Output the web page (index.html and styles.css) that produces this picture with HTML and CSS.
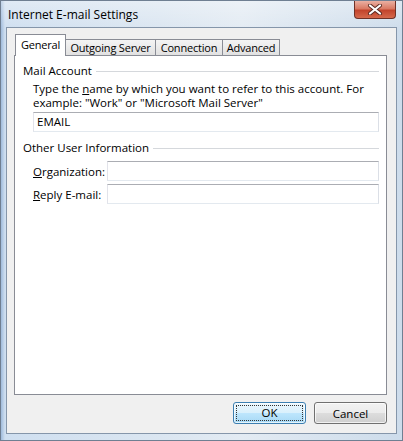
FILE: index.html
```html
<!DOCTYPE html>
<html>
    <head>
        <title>Internet E-mail Settings</title>
        <link rel="stylesheet" href="styles.css">
    </head>
    <body>
        <div class="window">
            <div class="titlebar">
                <span class="title">Internet E-mail Settings</span>
                <span class="close">
                    <svg width="16" height="11" viewBox="0 0 16 11">
                        <path d="M3 1.5 L13 9.5 M13 1.5 L3 9.5" stroke="#5a2a22" stroke-width="4" stroke-linecap="round"/>
                        <path d="M3 1.5 L13 9.5 M13 1.5 L3 9.5" stroke="#fff" stroke-width="2.2" stroke-linecap="round"/>
                    </svg>
                </span>
            </div>
            <div class="client">
                <div class="tabs">
                    <span class="tab selected tab-general">General</span>
                    <span class="tab tab-outgoing">Outgoing Server</span>
                    <span class="tab tab-connection">Connection</span>
                    <span class="tab tab-advanced">Advanced</span>
                </div>
                <div class="panel">
                    <div class="group-head"><span>Mail Account</span><i></i></div>
                    <p class="desc">Type the <span class="key">n</span>ame by which you want to refer to this account. For<br>example: "Work" or "Microsoft Mail Server"</p>
                    <div class="field wide">EMAIL</div>

                    <div class="group-head other"><span>Other User Information</span><i></i></div>
                    <div class="row first">
                        <label><span class="key">O</span>rganization:</label>
                        <div class="field"></div>
                    </div>
                    <div class="row">
                        <label><span class="key">R</span>eply E-mail:</label>
                        <div class="field"></div>
                    </div>
                </div>
                <div class="buttons">
                    <button class="btn default"><span>OK</span></button>
                    <button class="btn">Cancel</button>
                </div>
            </div>
        </div>
    </body>
</html>
```

FILE: styles.css
```css
html,
body {
    margin: 0;
    padding: 0;
}

body {
    width: 403px;
    height: 441px;
    font-family: "Open Sans", "Noto Sans", sans-serif;
    font-size: 11.5px;
    color: #000;
}

.key { text-decoration: underline; }

.window {
    box-sizing: border-box;
    width: 403px;
    height: 441px;
    border: 1px solid #6f7f92;
    padding: 0 5px 6px 5px;
    display: flex;
    flex-direction: column;
    background:
        linear-gradient(to bottom, rgba(255,255,255,.35), rgba(255,255,255,0) 30px),
        linear-gradient(to right, #9fbbdc 0, #cfdff0 4px, #dbe6f1 40%, #e3ebf3 60%, #cddceb 100%);
}

.titlebar {
    height: 26px;
    display: flex;
    align-items: flex-start;
    justify-content: space-between;
}

.title {
    margin: 6px 0 0 2px;
    font-size: 12px;
    line-height: 16px;
}

.close {
    width: 42px;
    height: 18px;
    margin-right: 1px;
    box-sizing: border-box;
    border: 1px solid #6e3127;
    border-top: none;
    border-radius: 0 0 4px 4px;
    background: linear-gradient(to bottom, #eab0a2 0, #d97a64 45%, #c2442c 55%, #d5694c 100%);
    display: flex;
    align-items: center;
    justify-content: center;
}

.close svg {
    display: block;
}

.client {
    flex: 1;
    display: flex;
    flex-direction: column;
    border: 1px solid #8596aa;
    background: #f0f0f0;
    padding: 6px 9px 9px 7px;
}

/* tabs */
.tabs {
    display: flex;
    align-items: flex-end;
    height: 21px;
    padding-left: 1px;
}

.tab {
    box-sizing: border-box;
    height: 16px;
    border: 1px solid #898c95;
    border-bottom: none;
    border-left: none;
    font-size: 11px;
    letter-spacing: -0.2px;
    text-align: center;
    white-space: nowrap;
    line-height: 15px;
    background: linear-gradient(to bottom, #f4f4f4, #e1e1e1);
}

.tab.selected {
    position: relative;
    z-index: 1;
    height: 22px;
    margin-bottom: -1px;
    border-left: 1px solid #898c95;
    line-height: 19px;
    background: #fff;
}

.tab-general { width: 51px; }
.tab-outgoing { width: 90px; }
.tab-connection { width: 67px; }
.tab-advanced { width: 57px; }

.panel {
    flex: 1;
    border: 1px solid #898c95;
    background: #fff;
    padding: 7px 7px 0 8px;
}

.group-head {
    display: flex;
    align-items: center;
    line-height: 15px;
}

.group-head i {
    flex: 1;
    height: 0;
    border-top: 1px solid #d5d8dc;
    margin: 1px 0 0 4px;
}

.group-head.other {
    margin-top: 8px;
}

.desc {
    margin: 4px 0 0 10px;
    line-height: 14px;
}

.field {
    box-sizing: border-box;
    height: 20px;
    border: 1px solid;
    border-color: #abadb3 #dbdfe6 #e3e9ef #e2e3ea;
    background: #fff;
    padding: 0 3px;
    line-height: 18px;
}

.field.wide {
    margin: 2px 0 0 10px;
}

.row {
    display: flex;
    align-items: center;
    margin: 3px 0 0 10px;
}

.row.first {
    margin-top: 6px;
}

.row label {
    width: 74px;
    flex: none;
}

.row .field {
    flex: 1;
}

/* buttons */
.buttons {
    display: flex;
    justify-content: flex-end;
    gap: 8px;
    margin-top: 7px;
}

.btn {
    box-sizing: border-box;
    width: 73px;
    height: 22px;
    margin: 0;
    padding: 0;
    font: inherit;
    color: #000;
    border: 1px solid #707070;
    border-radius: 3px;
    background: linear-gradient(to bottom, #f2f2f2 0, #ebebeb 50%, #dddddd 50%, #cfcfcf 100%);
    box-shadow: inset 0 0 0 1px rgba(255,255,255,.7);
}

.btn.default {
    border-color: #3c7fb1;
    background: linear-gradient(to bottom, #eaf6fd 0, #d9f0fc 50%, #bee6fd 50%, #a7d9f5 100%);
    padding: 2px;
}

.btn.default span {
    display: block;
    height: 100%;
    box-sizing: border-box;
    border: 1px dotted #333;
    line-height: 14px;
}
```
